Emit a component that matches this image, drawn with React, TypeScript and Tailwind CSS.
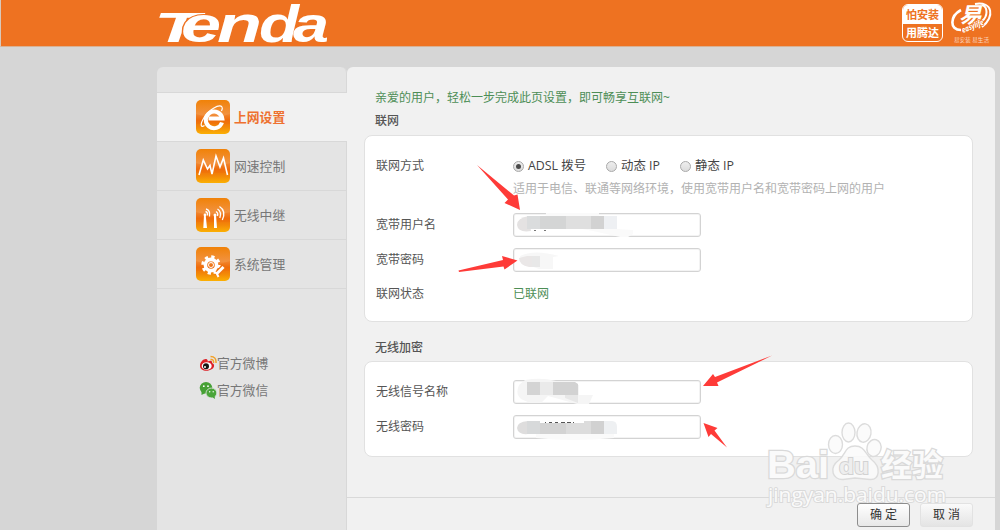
import type { ReactNode } from 'react';

const Tile = ({ id, children }: { id: string; children: ReactNode }) => (
  <svg width="34" height="34" viewBox="0 0 34 34" className="shrink-0">
    <defs>
      <linearGradient id={id} x1="0" y1="0" x2="0" y2="1">
        <stop offset="0" stopColor="#f08208" />
        <stop offset="0.42" stopColor="#f29240" />
        <stop offset="0.6" stopColor="#ef6d0c" />
        <stop offset="0.8" stopColor="#f38a08" />
        <stop offset="1" stopColor="#fbb004" />
      </linearGradient>
    </defs>
    <rect width="34" height="34" rx="5" fill={`url(#${id})`} />
    <path d="M0 14Q17 21 34 14V24H0Z" fill="#ee6b0b" opacity=".3" />
    {children}
  </svg>
);

const BrowserIcon = () => (
  <Tile id="tile-a">
    <path d="M26 22.500A8.300 8.300 0 1 1 26.300 18.600H12.500" fill="none" stroke="#fff" strokeWidth="4" />
    <path d="M8.500 25.500C4.500 28 4 24.500 7.500 18.500C12 10 23.500 3.500 26 7C26.700 8 26 10 25.500 11" fill="none" stroke="#fff" strokeWidth="1.200" />
  </Tile>
);
const SpeedIcon = () => (
  <Tile id="tile-b">
    <path d="M3 26L7.300 11L11.500 20L14 16.500L16 25L20 7L24 18L27.500 9L31.500 26" fill="none" stroke="#fff" strokeWidth="1.600" />
  </Tile>
);
const RelayIcon = () => (
  <Tile id="tile-c">
    <path d="M8 17H9.700L11 30H7.300ZM18 17H20L21 30H18Z" fill="#fff" />
    <circle cx="9" cy="17" r="1.400" fill="#fff" />
    <circle cx="19" cy="17" r="1.500" fill="#fff" />
    <path d="M9.500 13.500Q12 14 11.500 17.500M10 11Q14.500 12 13.500 18.500M20 13.500Q22.500 15 21.500 18M21.500 11Q26 14 23.800 20M23.500 8.500Q30.500 13 26.300 22" fill="none" stroke="#fff" strokeWidth="1.300" />
  </Tile>
);
const GearIcon = () => (
  <Tile id="tile-d">
    <circle cx="15" cy="18" r="5.600" fill="none" stroke="#fff" strokeWidth="3.600" />
    <circle cx="15" cy="18" r="8.200" fill="none" stroke="#fff" strokeWidth="3" strokeDasharray="3.220 3.220" />
    <circle cx="15" cy="18" r="2.500" fill="none" stroke="#fff" strokeWidth="1" />
    <path d="M20 28L28 19" stroke="#ee7312" strokeWidth="5" />
    <path d="M20.500 27L27.500 20" stroke="#fff" strokeWidth="2.800" />
    <path d="M17.500 25.500L20.500 26L22.500 30" fill="none" stroke="#fff" strokeWidth="2" />
  </Tile>
);

const navItems = [
  { label: '上网设置', icon: <BrowserIcon />, active: true },
  { label: '网速控制', icon: <SpeedIcon />, active: false },
  { label: '无线中继', icon: <RelayIcon />, active: false },
  { label: '系统管理', icon: <GearIcon />, active: false },
];

const WeiboIcon = () => (
  <svg width="18" height="18" viewBox="0 0 18 18" className="shrink-0">
    <path d="M1 12C1 7 6 4 8 5.500Q9 6 8.500 7.500C12 6 13.500 7 13 9C16 10 15.500 13.500 13 15C8 18.500 1 16.500 1 12Z" fill="#dc2027" />
    <ellipse cx="7.700" cy="12" rx="5" ry="3.800" fill="#fff" />
    <circle cx="7" cy="12.300" r="3" fill="#151515" />
    <circle cx="6" cy="13" r="1" fill="#fff" />
    <path d="M11.500 5.500Q15 5 14.500 9M11.500 2.500Q17.500 2.500 17 9" fill="none" stroke="#f3a127" strokeWidth="1.500" />
  </svg>
);
const WechatIcon = () => (
  <svg width="18" height="18" viewBox="0 0 18 18" className="shrink-0">
    <ellipse cx="7" cy="6.800" rx="6.300" ry="5.800" fill="#46a035" />
    <path d="M2.500 10L2.500 14L6.500 12Z" fill="#46a035" />
    <ellipse cx="12.400" cy="12" rx="5.400" ry="4.900" fill="#4ba53a" stroke="#e4e4e4" strokeWidth=".8" />
    <path d="M13 16L16 18L15.500 14Z" fill="#4ba53a" />
    <g fill="#fff">
      <circle cx="4.800" cy="5.200" r=".9" />
      <circle cx="9" cy="5.200" r=".9" />
      <circle cx="10.700" cy="10.800" r=".7" />
      <circle cx="14.200" cy="10.800" r=".7" />
    </g>
  </svg>
);

const Row = ({ label, children }: { label: string; children: ReactNode }) => (
  <div className="flex h-[34.400px] items-center">
    <span className="w-[137px] shrink-0">{label}</span>
    {children}
  </div>
);

const Field = ({ children }: { children: ReactNode }) => (
  <div className="relative h-6 w-[188px] rounded-[3px] border border-[#d3d3d3] bg-white shadow-[inset_0_0_0_1px_#f3f3f3]">
    {children}
  </div>
);

const Radio = ({ label, checked = false }: { label: string; checked?: boolean }) => (
  <span className="flex items-center gap-1 text-[12.400px] whitespace-nowrap text-[#444]">
    <span className="flex size-[11px] items-center justify-center rounded-full border border-[#a9a9a9] bg-linear-to-b from-[#eee] to-[#dcdcdc]">
      {checked && <span className="size-[5px] rounded-full bg-[#4a4a4a]" />}
    </span>
    {label}
  </span>
);

const EasyLifeLogo = () => (
  <svg width="44" height="44" viewBox="0 0 44 44" className="overflow-visible">
    <path d="M10 9C-1 15 -2 29 10 29" fill="none" stroke="#fff" strokeWidth="2.600" />
    <path d="M24 3C42 0 44 16 31 26M31 4C37 6 37 15 31 20" fill="none" stroke="#fff" strokeWidth="2" />
    <text x="8" y="22" fontSize="22" fontWeight="700" fill="#fff" textLength="23" lengthAdjust="spacingAndGlyphs" transform="translate(5 0) skewX(-13)">易</text>
    <text x="12" y="32" fontSize="8" fontStyle="italic" fontWeight="700" fill="#fff" stroke="#ee7221" strokeWidth="1.500" paintOrder="stroke" textLength="23" lengthAdjust="spacingAndGlyphs" transform="rotate(-22 12 32)">easylife</text>
    <text x="3" y="40.500" fontSize="5.500" fill="#fbd9c1" textLength="35" lengthAdjust="spacingAndGlyphs">易安装 易生活</text>
  </svg>
);

const Watermark = () => (
  <svg width="190" height="90" viewBox="0 0 190 90" className="pointer-events-none absolute top-[420px] left-[762px]">
    <g fill="#fafafa" fillOpacity=".85" stroke="#dcdcdc" strokeWidth="1.400">
      <ellipse cx="73.500" cy="24.500" rx="7" ry="9" />
      <ellipse cx="86.500" cy="12.500" rx="6.500" ry="9.500" />
      <ellipse cx="102" cy="13" rx="7" ry="9.300" transform="rotate(10 102 13)" />
      <ellipse cx="112" cy="28" rx="7" ry="8.500" transform="rotate(15 112 28)" />
      <path d="M93 26C83 26 84 34 77 40C66 48 71 60 81 59.500L93 58L108 59.500C118 60 119 47 110 40C103 34 103 26 93 26Z" />
    </g>
    <g fill="#fafafa" stroke="#d9d9d9" strokeWidth="2.600" paintOrder="stroke" fontWeight="700">
      <text x="5" y="58" fontSize="39" textLength="62" lengthAdjust="spacingAndGlyphs" fontFamily="'Liberation Sans', sans-serif">Bai</text>
      <text x="119" y="56" fontSize="31" textLength="62" lengthAdjust="spacingAndGlyphs">经验</text>
    </g>
    <text x="77" y="54" fontSize="22" fontWeight="700" fill="#eee" stroke="#d2d2d2" strokeWidth="1.800" paintOrder="stroke" textLength="30" lengthAdjust="spacingAndGlyphs" fontFamily="'Liberation Sans', sans-serif">du</text>
    <text x="6" y="82" fontSize="20" fill="#fafafa" stroke="#dadada" strokeWidth="2" paintOrder="stroke" textLength="178" lengthAdjust="spacingAndGlyphs">jingyan.baidu.com</text>
  </svg>
);

const Arrows = () => (
  <svg width="1000" height="530" viewBox="0 0 1000 530" className="pointer-events-none absolute top-0 left-0">
    <g fill="#fe3b38">
      <path d="M477 165L514 195.500L517.500 194.500L520 210L504.500 203L508 199.500Z" />
      <path d="M458.500 270.500L503 260L502 256L517.500 260.500L504.500 269.500L503.500 266.500L459 272Z" />
      <path d="M772 355.500L715 377L713 374L703 386L718.500 386L717 382.500Z" />
      <path d="M703.500 423L717.500 428L714.500 430.500L727 447.500L711 434L708.500 437Z" />
    </g>
  </svg>
);

export default function App() {
  return (
    <div className="relative flex h-[530px] w-[1000px] flex-col overflow-hidden bg-[#d6d6d6] font-['Open_Sans','Noto_Sans_CJK_SC',sans-serif] text-[12px] leading-4 text-[#555]">
      <header className="flex h-[47px] shrink-0 items-start justify-between border-b border-l border-[#d9b193] border-l-[#d8c8bc] bg-[#ee7221] pr-[5px] pl-[154px]">
        <svg width="178" height="46" viewBox="0 0 178 46" fill="#fff" fontFamily="'Liberation Sans', sans-serif" fontStyle="italic" fontWeight="700" className="overflow-visible">
          <text x="-1" y="41.500" fontSize="42" textLength="46" lengthAdjust="spacingAndGlyphs">T</text>
          <text x="26" y="41.500" fontSize="50" textLength="40" lengthAdjust="spacingAndGlyphs" stroke="#ee7221" strokeWidth="2" paintOrder="stroke">e</text>
          <text x="62" y="41.500" fontSize="52" textLength="45" lengthAdjust="spacingAndGlyphs">n</text>
          <text x="104" y="41.500" fontSize="52" textLength="40" lengthAdjust="spacingAndGlyphs">d</text>
          <text x="138" y="41.500" fontSize="50" textLength="36" lengthAdjust="spacingAndGlyphs">a</text>
        </svg>
        <div className="flex gap-[8px]">
          <div className="mt-1 flex h-[38px] w-[41px] flex-col overflow-hidden rounded-md border border-white text-center text-[11px] font-bold">
            <span className="flex h-[19px] items-center justify-center bg-white text-[#ee7221]">怕安装</span>
            <span className="flex h-[17px] items-center justify-center text-white">用腾达</span>
          </div>
          <div className="mt-px"><EasyLifeLogo /></div>
        </div>
      </header>

      <div className="flex min-h-0 flex-1 pt-5 pr-[5px] pl-[157px]">
        <aside className="flex w-[190px] shrink-0 flex-col rounded-t-md bg-[#e4e4e4]">
          <div className="h-[25px] rounded-tr-md border-r border-[#d8d8d8]" />
          <nav className="border-t border-[#d8d8d8]">
            {navItems.map((item) => (
              <div
                key={item.label}
                className={`flex h-[49px] items-center gap-1 border-b border-[#d8d8d8] pl-[39px] text-[12.800px] ${item.active ? 'bg-[#f1f1f1] font-bold text-[#ee7130]' : 'border-r text-[#777]'}`}
              >
                {item.icon}
                <span className="whitespace-nowrap">{item.label}</span>
              </div>
            ))}
          </nav>
          <div className="flex-1 border-r border-[#d8d8d8] pt-[60px] pl-[42px] text-[12.800px] text-[#777]">
            <div className="flex h-[27px] items-center"><WeiboIcon />官方微博</div>
            <div className="flex h-[27px] items-center"><WechatIcon />官方微信</div>
          </div>
        </aside>

        <main className="flex min-w-0 flex-1 flex-col rounded-t-md bg-[#f1f1f1]">
          <div className="flex h-[431px] shrink-0 flex-col border-b border-[#d9d9d9] px-[17px] pt-[22px]">
            <p className="h-[23px] pt-px pl-[11px] text-[#4d8e56]">亲爱的用户，轻松一步完成此页设置，即可畅享互联网~</p>
            <h2 className="h-[23px] pt-px pl-[11px] font-medium text-[#555]">联网</h2>
            <section className="h-[187px] w-[609px] shrink-0 rounded-lg border border-[#e1e1e1] bg-white pt-[20px] pl-[11px]">
              <div className="flex h-5 items-center">
                <span className="w-[137px] shrink-0">联网方式</span>
                <div className="flex gap-5">
                  <Radio label="ADSL 拨号" checked />
                  <Radio label="动态 IP" />
                  <Radio label="静态 IP" />
                </div>
              </div>
              <p className="h-[32px] pt-[5px] pl-[137px] text-[#b2b2b2]">适用于电信、联通等网络环境，使用宽带用户名和宽带密码上网的用户</p>
              <Row label="宽带用户名">
                <Field>
                  <svg width="130" height="28" viewBox="0 0 130 28" className="absolute -top-[2px] -left-px">
                    <path d="M33 1H86V5L104 10V17L120 18V22L115 25H107L80 19L32 10Z" fill="#fafafa" />
                    <path d="M16 4Q4 6 4 13Q5 21 18 19Z" fill="#e4e2e2" />
                    <path d="M14 4H27V17H14Z" fill="#dadcdd" />
                    <path d="M27 4H53V17H27Z" fill="#d4d5d5" />
                    <path d="M53 4H78V17H53Z" fill="#dfdfdf" />
                    <path d="M78 4H91V17H78Z" fill="#d2d2d2" />
                    <path d="M91 4H104V17H91Z" fill="#eef0f3" />
                    <path d="M21 18h2v1h-2zM31 18h2v1h-2z" fill="#777" />
                  </svg>
                </Field>
              </Row>
              <Row label="宽带密码">
                <Field>
                  <svg width="60" height="22" viewBox="0 0 60 22" className="absolute top-0 left-0">
                    <path d="M6 7Q20 0 45 7L39 8V20H25L8 14Z" fill="#f7f7f7" />
                    <path d="M13 7H26V18H15Q5 16 5 9Z" fill="#eae7e7" />
                    <path d="M18 7H26V18H18Z" fill="#e8e8e8" />
                  </svg>
                </Field>
              </Row>
              <Row label="联网状态"><span className="text-[#4d8e56]">已联网</span></Row>
            </section>
            <h2 className="h-[39px] pt-[18px] pl-[11px] font-medium text-[#555]">无线加密</h2>
            <section className="h-[96px] w-[609px] shrink-0 rounded-lg border border-[#e1e1e1] bg-white pt-[13px] pl-[11px]">
              <Row label="无线信号名称">
                <Field>
                  <svg width="90" height="27" viewBox="0 0 90 27" className="absolute -top-[3px] -left-px">
                    <path d="M12 2Q28 -1 43 3L66 7V17H80L76 26H64L35 18L28 25H17L8 21Q2 16 6 7Z" fill="#f5f5f5" />
                    <path d="M14 4H27V17H14Z" fill="#d4d4d4" />
                    <path d="M27 4H40V17H27Z" fill="#eaeaea" />
                    <path d="M40 4H62L65 6V17H40Z" fill="#d2d2d2" />
                    <path d="M52 17H65V25L52 20Z" fill="#e7e7e7" />
                  </svg>
                </Field>
              </Row>
              <Row label="无线密码">
                <Field>
                  <svg width="110" height="26" viewBox="0 0 110 26" className="absolute -top-px left-0">
                    <path d="M22 19H100V23Q58 27 22 23Z" fill="#fafafa" />
                    <path d="M14 6Q3 7 3 13Q4 20 14 19Z" fill="#dedddd" />
                    <path d="M13 6H26V19H13Z" fill="#d7d9da" />
                    <path d="M26 8H52V19H26Z" fill="#d3d3d3" />
                    <path d="M52 8H70V6H77V19H52Z" fill="#dcdcdc" />
                    <path d="M77 6H90V19H77Z" fill="#d1d1d1" />
                    <path d="M90 6H98Q103 6 103 12V19H90Z" fill="#eef0f2" />
                    <path d="M31 7.500h1m3 0h3m3 0h3m3 0h4m2 0h4m2 0h1" stroke="#555" strokeWidth="1" />
                  </svg>
                </Field>
              </Row>
            </section>
          </div>
          <footer className="flex justify-end gap-[10px] pt-[5px] pr-[22px] text-[#333]">
            <button className="h-6 w-[53px] rounded-[3px] border border-[#8d8d8d] bg-linear-to-b from-white to-[#e8e8e8]">确 定</button>
            <button className="h-6 w-[53px] rounded-[3px] border border-[#e2e2e2] bg-linear-to-b from-[#fafafa] to-[#e4e4e4]">取 消</button>
          </footer>
        </main>
      </div>
      <Watermark />
      <Arrows />
    </div>
  );
}
